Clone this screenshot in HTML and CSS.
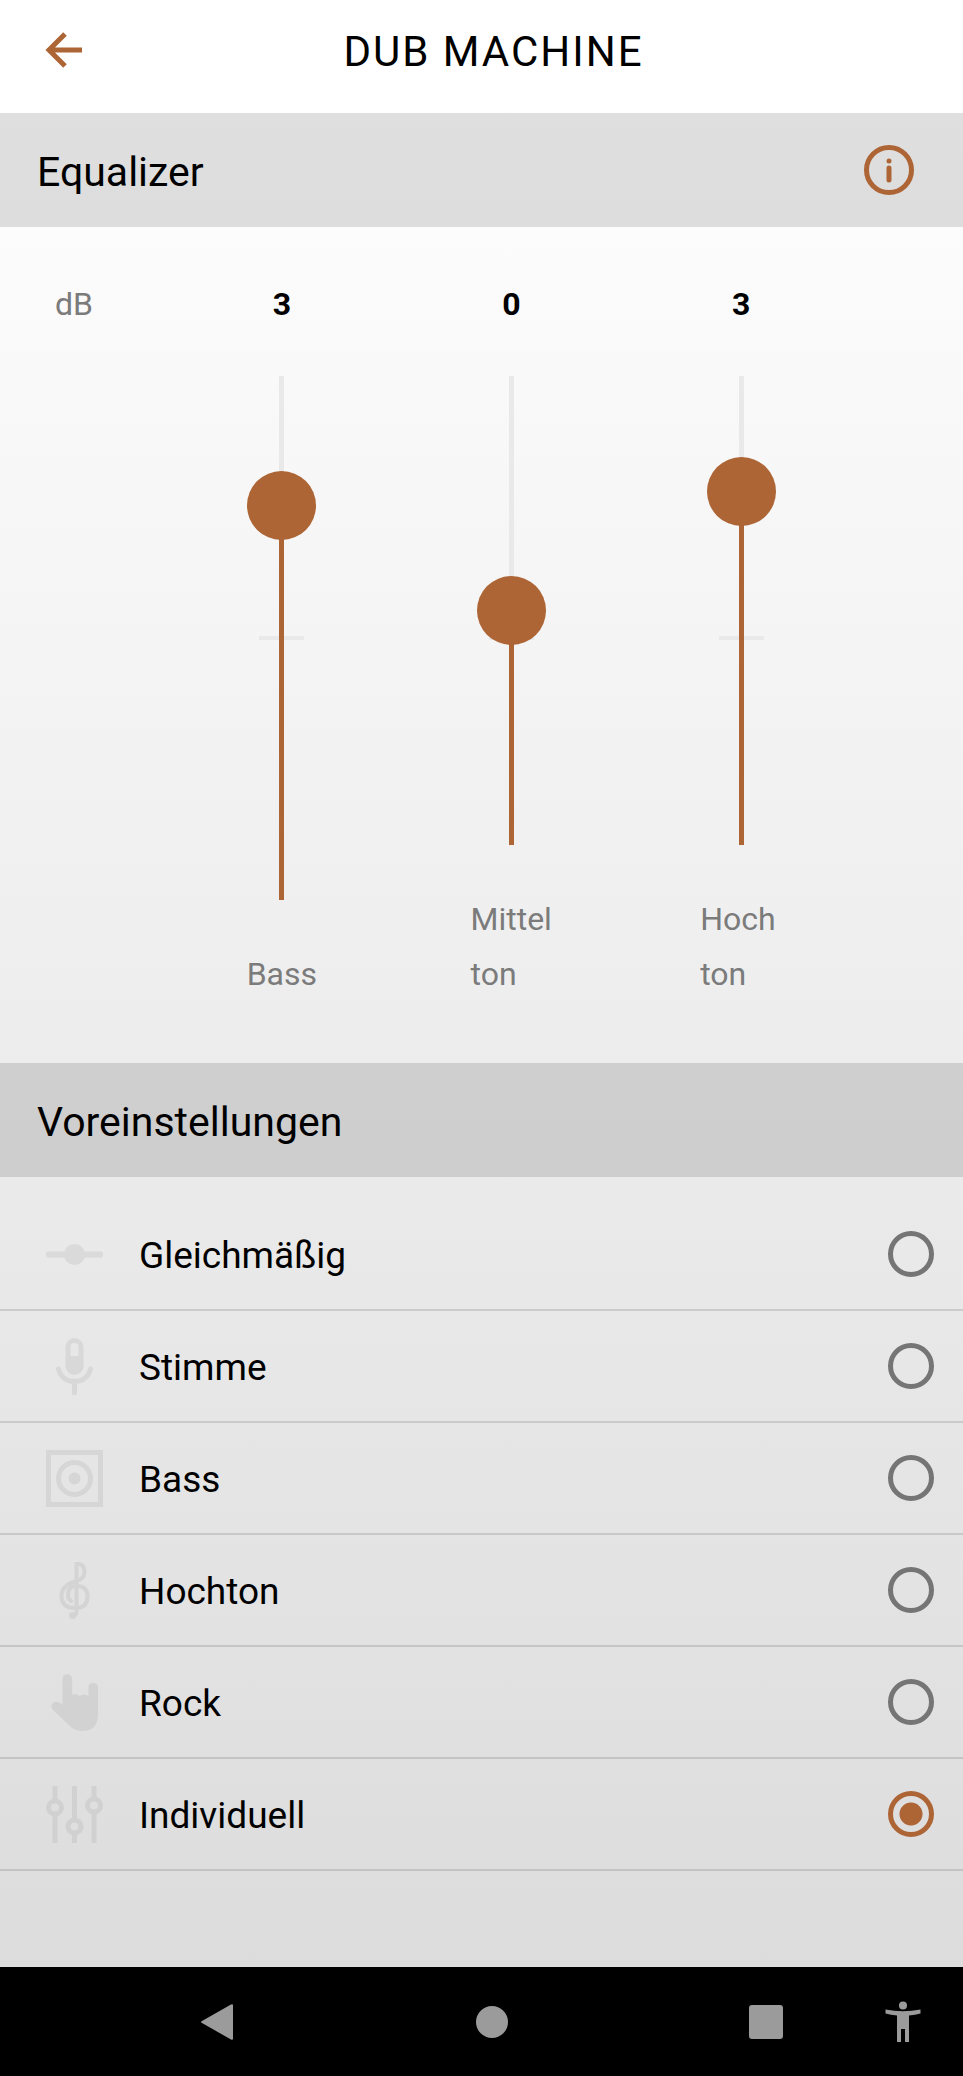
FILE: index.html
```html
<!DOCTYPE html>
<html lang="de">
<head>
    <meta charset="UTF-8">
    <meta name="viewport" content="width=device-width, initial-scale=1.0">
    <title>DUB MACHINE</title>
    <link rel="stylesheet" href="styles.css">
</head>
<body>
    <header class="topbar">
        <button class="back" type="button" aria-label="Zurück">
            <svg width="38" height="40" viewBox="0 0 38 40" fill="none" stroke="currentColor" stroke-width="5">
                <path d="M37 18H4M20 2L4 18l16 16"/>
            </svg>
        </button>
        <h1>DUB MACHINE</h1>
    </header>

    <main class="content">
        <div class="section-head">
            <h2>Equalizer</h2>
            <button class="info" type="button" aria-label="Info">
                <svg width="52" height="52" viewBox="0 0 52 52" fill="none" stroke="currentColor" stroke-width="5">
                    <circle cx="26" cy="26" r="22.5"/>
                    <path d="M26 24v12M26 17v.1" stroke-linecap="round"/>
                </svg>
            </button>
        </div>

        <div class="equalizer">
            <span class="unit">dB</span>
            <div class="band">
                <output for="bass">3</output>
                <input id="bass" type="range" min="-6" max="6" step="0.01" value="3.04" style="--pos: 25%">
                <label for="bass">Bass</label>
            </div>
            <div class="band">
                <output for="mitte">0</output>
                <input id="mitte" type="range" min="-6" max="6" step="0.01" value="0" style="--pos: 50%">
                <label class="two-lines" for="mitte">Mittel<br>ton</label>
            </div>
            <div class="band">
                <output for="hoch">3</output>
                <input id="hoch" type="range" min="-6" max="6" step="0.01" value="3.04" style="--pos: 25%">
                <label class="two-lines" for="hoch">Hoch<br>ton</label>
            </div>
        </div>

        <div class="section-head">
            <h2>Voreinstellungen</h2>
        </div>

        <div class="presets">
            <label class="preset">
                <svg class="icon" viewBox="0 0 57 57" fill="currentColor">
                    <rect y="25.5" width="57" height="6" rx="2"/>
                    <circle cx="28.5" cy="28.5" r="10.5"/>
                </svg>
                <span>Gleichmäßig</span>
                <input type="radio" name="preset">
            </label>
            <label class="preset">
                <svg class="icon" viewBox="0 0 57 57" fill="none" stroke="currentColor" stroke-width="5">
                    <rect x="22" y="2.5" width="13" height="32" rx="6.5"/>
                    <path d="M22 18h13v10a6.500 6.500 0 0 1-13 0z" fill="currentColor" stroke="none"/>
                    <path d="M12.500 31c2 8 8 12.500 16 12.500S42.500 39 44.500 31M28.500 43v12" stroke-linecap="round"/>
                </svg>
                <span>Stimme</span>
                <input type="radio" name="preset">
            </label>
            <label class="preset">
                <svg class="icon" viewBox="0 0 57 57" fill="none" stroke="currentColor" stroke-width="5">
                    <rect x="2.5" y="2.5" width="52" height="52"/>
                    <circle cx="28.5" cy="28.5" r="16"/>
                    <circle cx="28.5" cy="28.5" r="6" fill="currentColor" stroke="none"/>
                </svg>
                <span>Bass</span>
                <input type="radio" name="preset">
            </label>
            <label class="preset">
                <svg class="icon" viewBox="0 0 57 57" fill="none" stroke="currentColor" stroke-width="4" stroke-linecap="round">
                    <path d="M26 54q4.500 0 4.500-5V2q8-1 8 8 0 7-8 9-15 4-15 15 0 12 14 12 12 0 12-11.500 0-10.500-10.500-10.500-9 0-9 9 0 4 3 6"/>
                    <circle cx="26.5" cy="53.500" r="3.500" fill="currentColor" stroke="none"/>
                </svg>
                <span>Hochton</span>
                <input type="radio" name="preset">
            </label>
            <label class="preset">
                <svg class="icon" viewBox="0 0 57 57" fill="currentColor">
                    <path d="M16.500 5a4.800 4.800 0 0 1 9.600 0v16q4-2 7.400 1 4-3 9 0V13a4.800 4.800 0 0 1 9.500 0v27q0 17-16 17-6 0-11-4L7 36q-3-3-1-6 3-4 8-1l2.500 2z"/>
                </svg>
                <span>Rock</span>
                <input type="radio" name="preset">
            </label>
            <label class="preset">
                <svg class="icon" viewBox="0 0 57 57" fill="none" stroke="currentColor" stroke-width="5">
                    <path d="M9 0v15M9 28v29M28.500 0v34M28.500 47v10M48 0v13M48 26v31"/>
                    <circle cx="9" cy="21.500" r="6.500"/>
                    <circle cx="28.500" cy="40.500" r="6.500"/>
                    <circle cx="48" cy="19.500" r="6.500"/>
                </svg>
                <span>Individuell</span>
                <input type="radio" name="preset" checked>
            </label>
        </div>
    </main>

    <nav class="navbar">
        <div class="nav-main">
            <button type="button" aria-label="Zurück">
                <svg width="34" height="38" viewBox="0 0 34 38" fill="currentColor">
                    <path d="M31 1.500q2-1 2 1v33q0 2-2 1L2 20q-2-1 0-2z"/>
                </svg>
            </button>
            <button type="button" aria-label="Startseite">
                <svg width="32" height="32" viewBox="0 0 32 32" fill="currentColor">
                    <circle cx="16" cy="16" r="16"/>
                </svg>
            </button>
            <button type="button" aria-label="Letzte Apps">
                <svg width="34" height="34" viewBox="0 0 34 34" fill="currentColor">
                    <rect width="34" height="34" rx="3"/>
                </svg>
            </button>
        </div>
        <button type="button" aria-label="Bedienungshilfen">
            <svg width="36" height="42" viewBox="0 0 36 42" fill="currentColor">
                <circle cx="18" cy="4.500" r="4"/>
                <path d="M.5 8.500Q18 12 35.500 8.500v4Q30 14 24 14.500V41h-4V28h-4v13h-4V14.500Q6 14 .5 12.500z"/>
            </svg>
        </button>
    </nav>
</body>
</html>
```

FILE: styles.css
```css
* {
    box-sizing: border-box;
}
body {
    margin: 0;
    min-height: 100vh;
    display: flex;
    flex-direction: column;
    font-family: Roboto, "Liberation Sans", sans-serif;
    color: #000;
    background: #fff;
}
button {
    display: flex;
    align-items: center;
    justify-content: center;
    padding: 0;
    border: 0;
    background: none;
    cursor: pointer;
}
h1, h2 {
    margin: 0;
    font-weight: 400;
    line-height: 50px;
}

/* top bar */
.topbar {
    display: flex;
    align-items: center;
    height: 113px;
    padding: 0 104px 10px 0;
}
.back {
    width: 128px;
    height: 100px;
    color: #ad6536;
}
.topbar h1 {
    flex: 1;
    font-size: 42px;
    text-align: center;
    letter-spacing: 2px;
}

.content {
    flex: 1;
    background: linear-gradient(#fefefe, #dcdcdc);
}
.section-head {
    display: flex;
    align-items: center;
    justify-content: space-between;
    height: 114px;
    padding: 0 48px 0 37px;
    background: rgba(0, 0, 0, 0.12);
}
.section-head h2 {
    padding-top: 4px;
    font-size: 41px;
}
.info {
    color: #ad6536;
}

/* equalizer */
.equalizer {
    display: grid;
    grid-template-columns: 167px repeat(3, 1fr);
    padding: 50px 107px 61px 0;
    font-size: 32px;
    line-height: 55px;
}
.unit {
    padding-left: 55px;
    color: #7b7b7b;
}
.band {
    display: flex;
    flex-direction: column;
    align-items: center;
    height: 725px;
}
.band output {
    font-weight: 700;
}
.band label {
    color: #7b7b7b;
}
.band .two-lines {
    width: 82px;
}
.band input {
    appearance: none;
    writing-mode: vertical-lr;
    direction: rtl;
    flex: 1;
    min-height: 0;
    width: 69px;
    margin: 10px 0 13px;
    background:
        linear-gradient(#e9e9e9 var(--pos), #ad6536 var(--pos)) center / 5px calc(100% - 68px) no-repeat,
        linear-gradient(#e9e9e9, #e9e9e9) center 294px / 45px 4px no-repeat;
}
.band input::-webkit-slider-thumb {
    appearance: none;
    width: 69px;
    height: 69px;
    border-radius: 50%;
    background: #ad6536;
}

/* presets */
.presets {
    padding: 22px 0 96px;
}
.preset {
    display: flex;
    align-items: center;
    height: 112px;
    padding: 0 29px 0 46px;
    border-bottom: 2px solid rgba(0, 0, 0, 0.12);
    font-size: 37px;
    line-height: 44px;
    cursor: pointer;
}
.preset span {
    flex: 1;
    padding: 4px 0 0 36px;
}
.preset input {
    appearance: none;
    width: 46px;
    height: 46px;
    margin: 0;
    border: 5px solid #757575;
    border-radius: 50%;
}
.preset input:checked {
    border-color: #ad6536;
    background: radial-gradient(circle, #ad6536 11px, transparent 12px);
}
.icon {
    width: 57px;
    height: 57px;
    color: #000;
    opacity: 0.06;
}

/* android navigation */
.navbar {
    display: flex;
    height: 109px;
    padding: 0 28px 0 185px;
    background: #000;
}
.navbar button {
    width: 64px;
    color: #9b9b9b;
}
.nav-main {
    flex: 1;
    display: flex;
    justify-content: space-between;
    margin-right: 73px;
}
```
